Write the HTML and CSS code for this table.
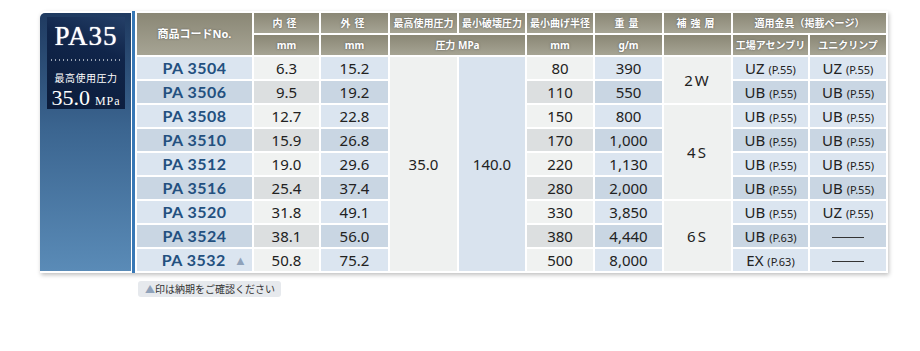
FILE: index.html
```html
<!DOCTYPE html>
<html lang="ja">
<head>
    <meta charset="UTF-8">
    <title>PA35 仕様表</title>
    <link rel="stylesheet" href="styles.css">
</head>
<body>
    <div class="spec-wrap">
        <div class="series">
            <div class="series-badge">
                <div class="series-name">PA35</div>
                <div class="series-dots"></div>
                <div class="series-label">最高使用圧力</div>
                <div class="series-value">35.0<small>MPa</small></div>
            </div>
        </div>
        <div class="series-rule"></div>

        <table class="spec-table">
            <colgroup>
                <col class="c-code">
                <col class="c-65">
                <col class="c-67">
                <col class="c-67">
                <col class="c-66">
                <col class="c-66">
                <col class="c-67">
                <col class="c-67">
                <col class="c-75">
                <col class="c-76">
            </colgroup>
            <thead>
                <tr>
                    <th rowspan="2" class="th-code">商品コードNo.</th>
                    <th class="wide">内径</th>
                    <th class="wide">外径</th>
                    <th>最高使用圧力</th>
                    <th>最小破壊圧力</th>
                    <th>最小曲げ半径</th>
                    <th class="wide">重量</th>
                    <th class="wide">補強層</th>
                    <th colspan="2">適用金具（掲載ページ）</th>
                </tr>
                <tr>
                    <th>mm</th>
                    <th>mm</th>
                    <th colspan="2">圧力 MPa</th>
                    <th>mm</th>
                    <th>g/m</th>
                    <th></th>
                    <th>工場アセンブリ</th>
                    <th>ユニクリンプ</th>
                </tr>
            </thead>
            <tbody>
                <tr class="odd">
                    <td class="code">PA 3504</td>
                    <td class="g">6.3</td>
                    <td class="b">15.2</td>
                    <td rowspan="9" class="merge-g">35.0</td>
                    <td rowspan="9" class="merge-b">140.0</td>
                    <td class="g">80</td>
                    <td class="b">390</td>
                    <td rowspan="2" class="merge-g layer">2W</td>
                    <td class="b">UZ <small>(P.55)</small></td>
                    <td class="b">UZ <small>(P.55)</small></td>
                </tr>
                <tr class="even">
                    <td class="code">PA 3506</td>
                    <td class="g">9.5</td>
                    <td class="b">19.2</td>
                    <td class="g">110</td>
                    <td class="b">550</td>
                    <td class="b">UB <small>(P.55)</small></td>
                    <td class="b">UB <small>(P.55)</small></td>
                </tr>
                <tr class="odd">
                    <td class="code">PA 3508</td>
                    <td class="g">12.7</td>
                    <td class="b">22.8</td>
                    <td class="g">150</td>
                    <td class="b">800</td>
                    <td rowspan="4" class="merge-g layer">4S</td>
                    <td class="b">UB <small>(P.55)</small></td>
                    <td class="b">UB <small>(P.55)</small></td>
                </tr>
                <tr class="even">
                    <td class="code">PA 3510</td>
                    <td class="g">15.9</td>
                    <td class="b">26.8</td>
                    <td class="g">170</td>
                    <td class="b">1,000</td>
                    <td class="b">UB <small>(P.55)</small></td>
                    <td class="b">UB <small>(P.55)</small></td>
                </tr>
                <tr class="odd">
                    <td class="code">PA 3512</td>
                    <td class="g">19.0</td>
                    <td class="b">29.6</td>
                    <td class="g">220</td>
                    <td class="b">1,130</td>
                    <td class="b">UB <small>(P.55)</small></td>
                    <td class="b">UB <small>(P.55)</small></td>
                </tr>
                <tr class="even">
                    <td class="code">PA 3516</td>
                    <td class="g">25.4</td>
                    <td class="b">37.4</td>
                    <td class="g">280</td>
                    <td class="b">2,000</td>
                    <td class="b">UB <small>(P.55)</small></td>
                    <td class="b">UB <small>(P.55)</small></td>
                </tr>
                <tr class="odd">
                    <td class="code">PA 3520</td>
                    <td class="g">31.8</td>
                    <td class="b">49.1</td>
                    <td class="g">330</td>
                    <td class="b">3,850</td>
                    <td rowspan="3" class="merge-g layer">6S</td>
                    <td class="b">UB <small>(P.55)</small></td>
                    <td class="b">UZ <small>(P.55)</small></td>
                </tr>
                <tr class="even">
                    <td class="code">PA 3524</td>
                    <td class="g">38.1</td>
                    <td class="b">56.0</td>
                    <td class="g">380</td>
                    <td class="b">4,440</td>
                    <td class="b">UB <small>(P.63)</small></td>
                    <td class="b"><span class="dash"></span></td>
                </tr>
                <tr class="odd">
                    <td class="code">PA 3532<span class="mark">▲</span></td>
                    <td class="g">50.8</td>
                    <td class="b">75.2</td>
                    <td class="g">500</td>
                    <td class="b">8,000</td>
                    <td class="b">EX <small>(P.63)</small></td>
                    <td class="b"><span class="dash"></span></td>
                </tr>
            </tbody>
        </table>
    </div>

    <p class="note"><span class="mark">▲</span>印は納期をご確認ください</p>
</body>
</html>
```

FILE: styles.css
```css
body {
    margin: 0;
    font-family: "Noto Sans", "Noto Sans CJK JP", sans-serif;
    color: #222;
    background: #fff;
}

.spec-wrap {
    display: flex;
    align-items: stretch;
    width: 848px;
    margin: 11px 0 0 40px;
    background: #fff;
    border-top-left-radius: 5px;
    box-shadow: 1px 2px 4px rgba(0,0,0,0.25);
}

/* Series panel on the left */
.series {
    width: 91px;
    margin: 2px 1px 2px 0;
    border-top-left-radius: 5px;
    background: linear-gradient(#1f3a60, #3b6590 45%, #5a8bb7);
}

.series-badge {
    margin: 4px 6px 0 7px;
    height: 92px;
    background: linear-gradient(200deg, #243f67 0%, #10254a 35%, #0b1c3a 100%);
    color: #fff;
    text-align: center;
}

.series-name {
    padding-top: 5px;
    font-family: "Liberation Serif", serif;
    font-size: 27px;
    line-height: 28px;
    letter-spacing: 1px;
    text-shadow: 0 0 1px #fff;
}

.series-dots {
    height: 2px;
    margin: 9px 3px 0 4px;
    background: repeating-linear-gradient(to right, #9aa4b4 0 1px, transparent 1px 4px);
}

.series-label {
    margin-top: 11px;
    font-size: 10px;
    line-height: 12px;
    letter-spacing: 0.5px;
}

.series-value {
    margin-top: 2px;
    font-family: "Liberation Serif", serif;
    font-size: 22px;
    line-height: 24px;
}

.series-value small {
    margin-left: 5px;
    font-size: 12px;
    letter-spacing: 1px;
}

.series-rule {
    width: 3px;
    background: #3878b6;
}

/* Spec table */
.spec-table {
    table-layout: fixed;
    width: 753px;
    border-collapse: separate;
    border-spacing: 2px;
    background: #fff;
}

.c-code { width: 115px; }
.c-65 { width: 65px; }
.c-66 { width: 66px; }
.c-67 { width: 67px; }
.c-75 { width: 75px; }
.c-76 { width: 76px; }

.spec-table th {
    height: 20px;
    padding: 0;
    background: linear-gradient(#8a8775, #a6a494);
    color: #fff;
    font-size: 10px;
    line-height: 14px;
    font-weight: bold;
    white-space: nowrap;
    text-shadow: 0 0 2px #555;
}

.spec-table th.wide {
    letter-spacing: 4px;
}

.spec-table th.th-code {
    font-size: 11px;
}

.spec-table td {
    height: 22px;
    padding: 0;
    text-align: center;
    vertical-align: middle;
    font-size: 15px;
    line-height: 16px;
    white-space: nowrap;
}

.spec-table td small {
    font-size: 11px;
    line-height: 10px;
}

.spec-table td.layer {
    letter-spacing: 2px;
}

.odd .g { background: #f0f2f1; }
.even .g { background: #dcdfe0; }
.odd .b, .odd .code { background: #dbe5f0; }
.even .b, .even .code { background: #c9d6e3; }

.merge-g { background: #eff1f0; }
.merge-b { background: #d9e3ee; }

.spec-table td.code {
    font-family: "Lato", "Noto Sans", sans-serif;
    font-size: 16px;
    font-weight: bold;
    letter-spacing: 0.5px;
    color: #23507f;
}

.spec-table td.code .mark {
    margin-left: 8px;
    margin-right: -20px;
    font-size: 13px;
    line-height: 10px;
    vertical-align: 1px;
}

.mark {
    color: #8fa2ba;
}

.dash {
    display: inline-block;
    width: 32px;
    border-top: 1.5px solid #333;
    vertical-align: middle;
}

.note {
    display: inline-block;
    margin: 8px 0 0 138px;
    padding: 0 6px 0 7px;
    background: #e6e9ed;
    border-radius: 3px;
    font-size: 10px;
    line-height: 16px;
    color: #333;
}

.note .mark {
    font-size: 10px;
}
```
